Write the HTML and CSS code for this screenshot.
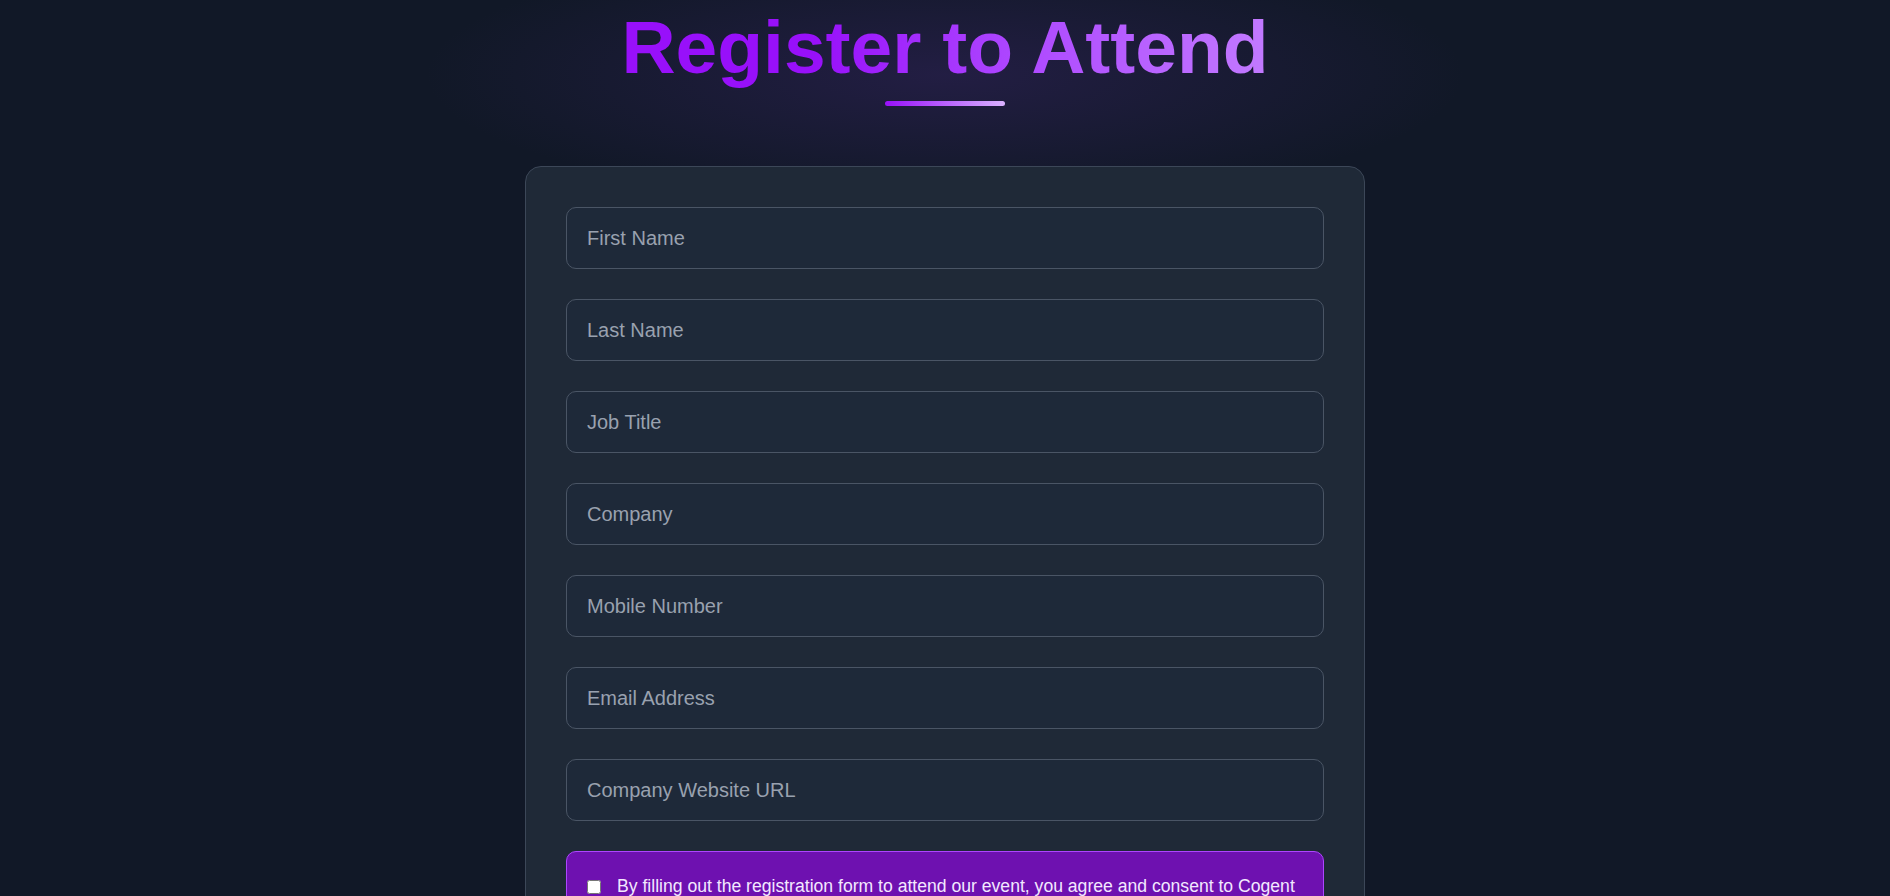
FILE: index.html
```html
<!DOCTYPE html>
<html lang="en">
<head>
<meta charset="utf-8">
<title>Register to Attend</title>
<link rel="stylesheet" href="styles.css">
</head>
<body>
<main class="page">
  <header class="hero">
    <h1 class="hero-title">Register to Attend</h1>
    <div class="hero-bar"></div>
  </header>
  <form class="card">
    <input class="field" type="text" placeholder="First Name">
    <input class="field" type="text" placeholder="Last Name">
    <input class="field" type="text" placeholder="Job Title">
    <input class="field" type="text" placeholder="Company">
    <input class="field" type="tel" placeholder="Mobile Number">
    <input class="field" type="email" placeholder="Email Address">
    <input class="field" type="url" placeholder="Company Website URL">
    <label class="consent">
      <input class="consent-box" type="checkbox">
      <span class="consent-text">By filling out the registration form to attend our event, you agree and consent to Cogent Infotech and its partners contacting you about this event and related services.</span>
    </label>
  </form>
</main>
</body>
</html>
```

FILE: styles.css
```css
* { box-sizing: border-box; }

html, body {
  margin: 0;
  padding: 0;
}

body {
  background: #111827;
  font-family: "Liberation Sans", Arial, sans-serif;
  color: #e5e7eb;
}

.page {
  display: flex;
  flex-direction: column;
  align-items: center;
}

.hero {
  width: 100%;
  display: flex;
  flex-direction: column;
  align-items: center;
  padding-top: 4px;
  background: radial-gradient(ellipse 520px 130px at 50% 45%, rgba(67, 40, 120, 0.35), rgba(17, 24, 39, 0) 100%);
}

.hero-title {
  margin: 0;
  font-size: 75px;
  font-weight: 700;
  line-height: 1.15;
  background: linear-gradient(90deg, #9810fa 0%, #9810fa 30%, #ad46ff 60%, #c27aff 100%);
  -webkit-background-clip: text;
  background-clip: text;
  color: transparent;
}

.hero-bar {
  margin-top: 11px;
  width: 120px;
  height: 5px;
  border-radius: 3px;
  background: linear-gradient(90deg, #9810fa, #dab2ff);
  margin-bottom: 60px;
}

.card {
  width: 840px;
  background: #1f2937;
  border: 1px solid #3c4758;
  border-radius: 16px;
  padding: 40px 40px 40px;
  display: flex;
  flex-direction: column;
  gap: 30px;
}

.field {
  display: block;
  width: 100%;
  height: 62px;
  padding: 0 20px;
  background: #1e2939;
  border: 1px solid #4a5565;
  border-radius: 10px;
  font-family: "Liberation Sans", Arial, sans-serif;
  font-size: 20px;
  color: #e5e7eb;
  outline: none;
}

.field::placeholder {
  color: #99a1af;
}

.consent {
  display: flex;
  align-items: flex-start;
  gap: 16px;
  padding: 21px 20px;
  background: #6e11b0;
  border: 1px solid #ad46ff;
  border-radius: 10px;
}

.consent-box {
  margin: 7px 0 0 0;
  width: 14px;
  height: 14px;
  flex: none;
}

.consent-text {
  font-size: 17.6px;
  line-height: 1.5;
  color: #f3e8ff;
}
```
